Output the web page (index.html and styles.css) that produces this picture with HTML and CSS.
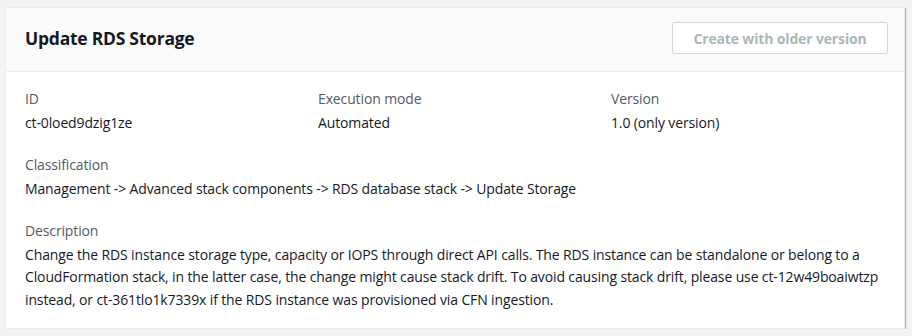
FILE: index.html
```html
<!DOCTYPE html>
<html lang="en">
<head>
	<meta charset="UTF-8">
	<meta name="viewport" content="width=device-width, initial-scale=1.0">
	<title>Update RDS Storage</title>
	<link rel="stylesheet" href="styles.css">
</head>
<body>
	<!-- Change type details card -->
	<div class="card">
		<div class="card-header">
			<h2>Update RDS Storage</h2>
			<button class="btn-disabled" disabled>Create with older version</button>
		</div>
		<div class="card-body">
			<div class="cols">
				<div class="field">
					<div class="label">ID</div>
					<div class="value">ct-0loed9dzig1ze</div>
				</div>
				<div class="field">
					<div class="label">Execution mode</div>
					<div class="value">Automated</div>
				</div>
				<div class="field">
					<div class="label">Version</div>
					<div class="value">1.0 (only version)</div>
				</div>
			</div>
			<div class="field">
				<div class="label">Classification</div>
				<div class="value">Management -&gt; Advanced stack components -&gt; RDS database stack -&gt; Update Storage</div>
			</div>
			<div class="field">
				<div class="label">Description</div>
				<div class="value">Change the RDS instance storage type, capacity or IOPS through direct API calls. The RDS instance can be standalone or belong to a CloudFormation stack, in the latter case, the change might cause stack drift. To avoid causing stack drift, please use ct-12w49boaiwtzp instead, or ct-361tlo1k7339x if the RDS instance was provisioned via CFN ingestion.</div>
			</div>
		</div>
	</div>
</body>
</html>
```

FILE: styles.css
```css
body {
	background-color: #f2f3f3;
	font-family: "Open Sans", "Liberation Sans", sans-serif;
	font-size: 14px;
	letter-spacing: -0.13px;
	color: #16191f;
	margin: 0;
	padding: 7px 7px 0 5px;
}

.card {
	background-color: #fff;
	border: 1px solid #eaeded;
	box-shadow: 1px 1px 1px rgba(0, 28, 36, 0.3);
}

.card-header {
	display: flex;
	align-items: center;
	justify-content: space-between;
	height: 63px;
	padding: 0 16px 0 19px;
	background-color: #fafafa;
	border-bottom: 1px solid #eaeded;
}

.card-header h2 {
	margin: 0 0 3px;
	font-size: 17.5px;
	letter-spacing: -0.25px;
	font-weight: 700;
	color: #16191f;
}

.btn-disabled {
	font-family: inherit;
	font-size: 14px;
	letter-spacing: -0.15px;
	font-weight: 700;
	color: #aab7b8;
	background-color: #fff;
	border: 1px solid #d5dbdb;
	border-radius: 2px;
	width: 216px;
	height: 32px;
	margin-top: -3px;
}

.card-body {
	padding: 16px 20px 17px 19px;
	display: flex;
	flex-direction: column;
	gap: 20px;
}

.cols {
	display: grid;
	grid-template-columns: repeat(3, 1fr);
	gap: 20px;
}

.field {
	line-height: 22.5px;
}

.label {
	color: #545b64;
	margin-bottom: 1px;
}
```
